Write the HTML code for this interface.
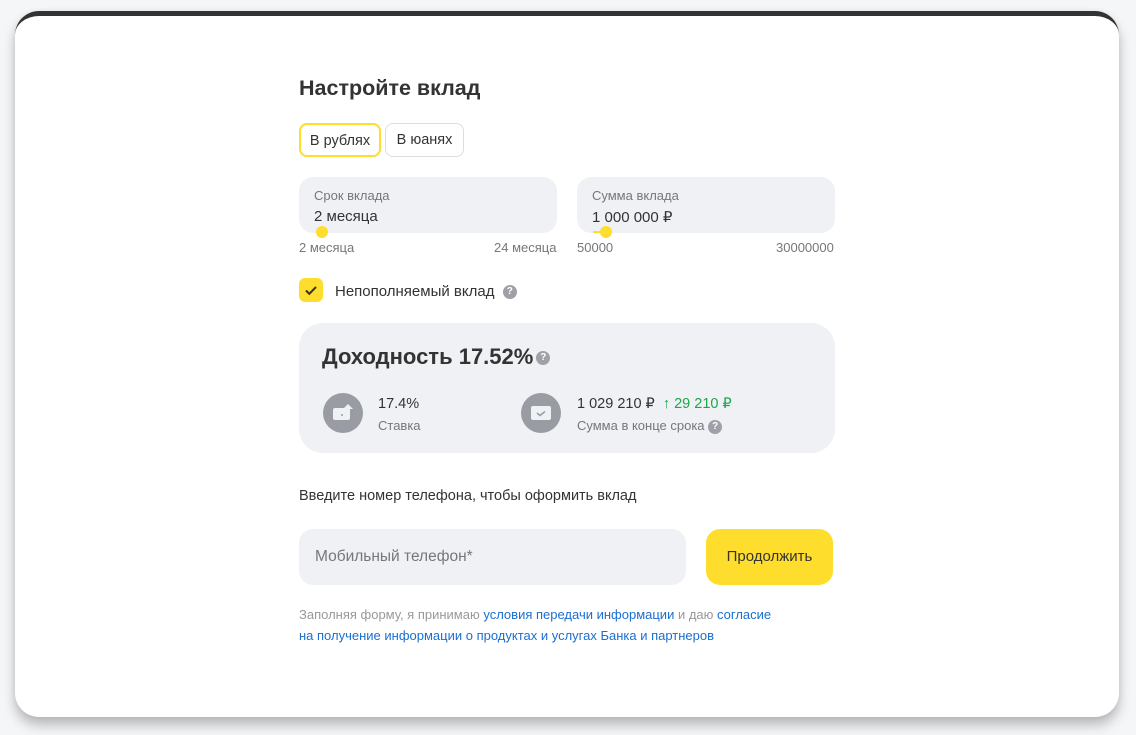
<!DOCTYPE html>
<html><head><meta charset="utf-8"><style>
*{box-sizing:border-box;margin:0;padding:0}
body{width:1136px;height:735px;background:#f5f6f8;font-family:"Liberation Sans",sans-serif;color:#333;position:relative;overflow:hidden}
.card{position:absolute;left:15px;top:11px;width:1104px;height:706px;background:#fff;border-radius:24px;border-top:5px solid #333;box-shadow:0 8px 12px rgba(0,0,0,.25),0 0 6px rgba(0,0,0,.06)}
.abs{position:absolute}
h1{position:absolute;left:299px;top:76px;font-size:21.5px;font-weight:bold;color:#333}
.tab{position:absolute;top:123px;height:34px;border-radius:8px;font-size:14.5px;line-height:32px;text-align:center;color:#333}
.field{position:absolute;top:177px;width:258px;height:56px;background:#f0f1f5;border-radius:14px}
.field .l{position:absolute;left:15px;top:11px;font-size:13px;color:#777}
.field .v{position:absolute;left:15px;top:31px;font-size:15px;color:#333}
.dot{position:absolute;width:12px;height:12px;border-radius:50%;background:#ffdd2d}
.small{position:absolute;font-size:13px;color:#777;top:240px}
.q{display:inline-block;width:14px;height:14px;border-radius:50%;background:#a0a0a8;color:#fff;font-size:10px;line-height:14px;text-align:center;font-weight:bold;vertical-align:middle}
.panel{position:absolute;left:299px;top:323px;width:536px;height:130px;background:#eff1f5;border-radius:24px}
.ic{position:absolute;width:40px;height:40px;border-radius:50%;background:#9a9ca4}
.a{color:#1a6fd1}
</style></head><body>
<div class="card"></div>
<h1>Настройте вклад</h1>
<div class="tab" style="left:299px;width:82px;border:2px solid #ffdd2d">В рублях</div>
<div class="tab" style="left:385px;width:79px;border:1px solid #ddd">В юанях</div>

<div class="field" style="left:299px"><div class="l">Срок вклада</div><div class="v">2 месяца</div></div>
<div class="dot" style="left:316px;top:226px"></div>
<div class="small" style="left:299px">2 месяца</div>
<div class="small" style="left:494px">24 месяца</div>

<div class="field" style="left:577px"><div class="l">Сумма вклада</div><div class="v">1 000 000 ₽</div></div>
<div class="abs" style="left:593px;top:231px;width:10px;height:2px;background:#ffdd2d"></div>
<div class="dot" style="left:600px;top:226px"></div>
<div class="small" style="left:577px">50000</div>
<div class="small" style="left:776px">30000000</div>

<div class="abs" style="left:299px;top:278px;width:24px;height:24px;border-radius:6px;background:#ffdd2d">
<svg width="24" height="24" viewBox="0 0 24 24"><path d="M7 12.5l3.3 3.3L17 9" stroke="#333" stroke-width="2" fill="none"/></svg></div>
<div class="abs" style="left:335px;top:283px;font-size:15px;color:#333">Непополняемый вклад &nbsp;<span class="q">?</span></div>

<div class="panel">
<div class="abs" style="left:23px;top:21px;font-size:22px;font-weight:bold;color:#333">Доходность 17.52%<span class="q" style="margin-left:3px">?</span></div>
<div class="ic" style="left:24px;top:70px"><svg width="40" height="40"><rect x="10" y="15" width="17" height="12" rx="2" fill="#f0f1f4"/><path d="M25 11l5 5h-3v8h-4v-8h-3z" fill="#f0f1f4"/><circle cx="19" cy="22" r="1" fill="#9a9ca4"/></svg></div>
<div class="abs" style="left:79px;top:73px;font-size:14.5px;color:#333">17.4%</div>
<div class="abs" style="left:79px;top:95px;font-size:13px;color:#777">Ставка</div>
<div class="ic" style="left:222px;top:70px"><svg width="40" height="40"><rect x="10" y="13" width="20" height="14" rx="2" fill="#f0f1f4"/><path d="M16 20l3 2.5 5-4" stroke="#9a9ca4" stroke-width="1.5" fill="none"/></svg></div>
<div class="abs" style="left:278px;top:73px;font-size:14.5px;color:#333">1 029 210 ₽ &nbsp;<span style="color:#1ea54d">↑ 29 210 ₽</span></div>
<div class="abs" style="left:278px;top:95px;font-size:13px;color:#777">Сумма в конце срока <span class="q">?</span></div>
</div>

<div class="abs" style="left:299px;top:488px;font-size:14.5px;color:#333">Введите номер телефона, чтобы оформить вклад</div>
<div class="abs" style="left:299px;top:529px;width:387px;height:56px;background:#f0f1f5;border-radius:14px;padding:19px 16px;font-size:15.5px;color:#777">Мобильный телефон*</div>
<div class="abs" style="left:706px;top:529px;width:127px;height:56px;background:#ffdd2d;border-radius:14px;text-align:center;line-height:56px;font-size:15px;color:#333">Продолжить</div>
<div class="abs" style="left:299px;top:604px;font-size:13px;color:#999;line-height:21px">Заполняя форму, я принимаю <span class="a">условия передачи информации</span> и даю <span class="a">согласие</span><br><span class="a">на получение информации о продуктах и услугах Банка и партнеров</span></div>
</body></html>
